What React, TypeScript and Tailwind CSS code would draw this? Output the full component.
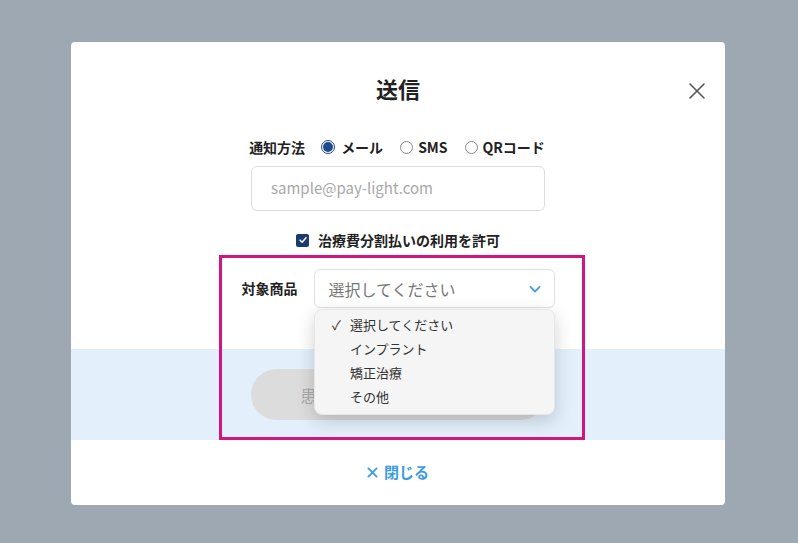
import React from "react";

const font = { fontFamily: '"Noto Sans CJK JP", "Noto Sans", sans-serif' };

export default function App() {
  return (
    <div className="w-[798px] h-[543px] bg-[#9ea8b2] pt-[42px] pl-[71px]" style={font}>
      <div className="relative w-[654px] h-[463px] bg-white rounded-[4px] flex flex-col items-center">
        <button className="absolute right-[19px] top-[40px] w-[18px] h-[18px] text-[#555]">
          <svg viewBox="0 0 18 18" width="18" height="18" fill="none" stroke="currentColor" strokeWidth="1.6" strokeLinecap="round">
            <path d="M2 2 L16 16 M16 2 L2 16" />
          </svg>
        </button>

        <h1 className="mt-[33px] h-[26px] text-[22px] leading-[26px] font-bold text-[#222]">送信</h1>

        <div className="mt-[36px] h-[20px] flex items-center text-[14px] font-bold text-[#222] ml-[-2px]">
          <span>通知方法</span>
          <div className="ml-[16px] flex items-center gap-[6px]">
            <span className="w-[14px] h-[14px] rounded-full border border-[#1e4b8f] flex items-center justify-center">
              <span className="w-[10px] h-[10px] rounded-full bg-[#1e4b8f]" />
            </span>
            <span>メール</span>
          </div>
          <div className="ml-[17px] flex items-center gap-[5px]">
            <span className="w-[13px] h-[13px] rounded-full border border-[#888]" />
            <span>SMS</span>
          </div>
          <div className="ml-[17px] flex items-center gap-[5px]">
            <span className="w-[13px] h-[13px] rounded-full border border-[#888]" />
            <span>QRコード</span>
          </div>
        </div>

        <div className="mt-[9px] w-[294px] h-[45px] rounded-[6px] border border-[#dcdcdc] flex items-center pl-[19px] text-[15px] text-[#a8a8a8]">
          sample@pay-light.com
        </div>

        <div className="mt-[19px] h-[20px] flex items-center text-[14px] font-bold text-[#222]">
          <span className="w-[13px] h-[13px] rounded-[2px] bg-[#1a3d6e] flex items-center justify-center mr-[9px]">
            <svg viewBox="0 0 12 12" width="10" height="10" fill="none" stroke="white" strokeWidth="1.8" strokeLinecap="round" strokeLinejoin="round">
              <path d="M2.5 6.2 L5 8.6 L9.6 3.4" />
            </svg>
          </span>
          <span>治療費分割払いの利用を許可</span>
        </div>

        <div className="mt-[19px] h-[39px] flex items-center">
          <span className="text-[14px] font-bold text-[#222]">対象商品</span>
          <div className="ml-[16px] w-[241px] h-[39px] rounded-[6px] border border-[#e0e0e0] flex items-center justify-between pl-[14px] pr-[12px] text-[16px] text-[#777]">
            <span>選択してください</span>
            <svg viewBox="0 0 14 14" width="14" height="14" fill="none" stroke="#4aa0e6" strokeWidth="1.8" strokeLinecap="round" strokeLinejoin="round">
              <path d="M2.5 5 L7 9.5 L11.5 5" />
            </svg>
          </div>
        </div>

        <div className="mt-[41px] w-full h-[91px] bg-[#e3f0fb] flex items-center justify-center">
          <div className="w-[295px] h-[51px] rounded-full bg-[#dcdcdc] flex items-center text-[16px] text-[#aaa] pl-[50px]">
            患者様へ送信する
          </div>
        </div>

        <div className="flex-1 flex items-center justify-center text-[15px] font-bold text-[#3d9be6] gap-[6px]">
          <svg viewBox="0 0 12 12" width="11" height="11" fill="none" stroke="currentColor" strokeWidth="2" strokeLinecap="round">
            <path d="M1.5 1.5 L10.5 10.5 M10.5 1.5 L1.5 10.5" />
          </svg>
          <span>閉じる</span>
        </div>

        <div className="absolute left-[243px] top-[267px] w-[241px] h-[106px] rounded-[8px] bg-[#f5f5f5] border border-[#e6e6e6] shadow-[0_6px_18px_rgba(0,0,0,0.18)] pt-[3px] text-[13px] text-[#333]">
          <div className="h-[24px] flex items-center pl-[17px]">
            <span className="w-[18px]">✓</span>
            <span>選択してください</span>
          </div>
          <div className="h-[24px] flex items-center pl-[35px]">インプラント</div>
          <div className="h-[24px] flex items-center pl-[35px]">矯正治療</div>
          <div className="h-[24px] flex items-center pl-[35px]">その他</div>
        </div>

        <div className="absolute left-[148px] top-[213px] w-[366px] h-[185px] border-[3px] border-[#d4157f] pointer-events-none" />
      </div>
    </div>
  );
}
